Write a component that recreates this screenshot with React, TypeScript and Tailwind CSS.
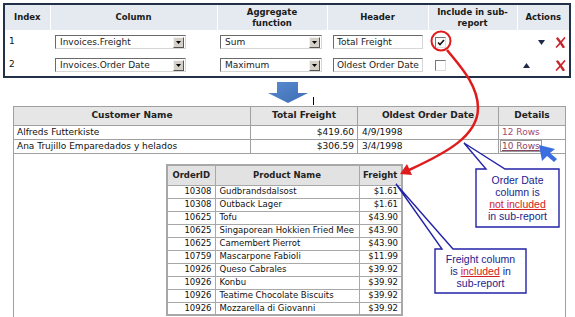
import React from "react";

const DropArrow = () => (
  <svg width="5" height="3" viewBox="0 0 5 3">
    <path d="M0 0H5L2.5 3Z" fill="#000" />
  </svg>
);

function Select({ value, className }: { value: string; className: string }) {
  return (
    <div className={`flex h-[14px] items-center border border-t-[#6a6a6a] border-l-[#6a6a6a] border-b-[#d6d6d6] border-r-[#d6d6d6] bg-white ${className}`}>
      <span className="flex-1 truncate pl-[4px] text-[9px] leading-none text-[#222]">{value}</span>
      <span className="mr-[1px] flex h-[11px] w-[11px] items-center justify-center border border-t-[#f4f4f4] border-l-[#f4f4f4] border-b-[#555] border-r-[#555] bg-[#d4d0c8]">
        <DropArrow />
      </span>
    </div>
  );
}

function TextBox({ value }: { value: string }) {
  return (
    <div className="flex h-[14px] w-[90px] items-center border border-t-[#6a6a6a] border-l-[#6a6a6a] border-b-[#d6d6d6] border-r-[#d6d6d6] bg-white pl-[3px] text-[9px] leading-none text-[#222]">
      {value}
    </div>
  );
}

function CheckBox({ checked }: { checked?: boolean }) {
  return (
    <div className="flex h-[11px] w-[11px] items-center justify-center border border-t-[#777] border-l-[#777] border-b-[#ddd] border-r-[#ddd] bg-white">
      {checked && (
        <svg width="8" height="7" viewBox="0 0 8 7">
          <path d="M1 3.5L3 5.5L7 1" stroke="#111" strokeWidth="1.6" fill="none" />
        </svg>
      )}
    </div>
  );
}

const RedX = () => (
  <svg width="11" height="11" viewBox="0 0 11 11">
    <path d="M2.5 1.5C4.5 4 6.5 7 8.5 10" stroke="#c9262c" strokeWidth="2.4" strokeLinecap="round" fill="none" />
    <path d="M9.5 1C7 4 4.5 7 1.5 10" stroke="#c9262c" strokeWidth="1.7" strokeLinecap="round" fill="none" />
  </svg>
);

const Tri = ({ up }: { up?: boolean }) => (
  <svg width="7" height="5" viewBox="0 0 7 5">
    <path d={up ? "M3.5 0L7 5H0Z" : "M0 0H7L3.5 5Z"} fill="#1e2a48" />
  </svg>
);

const subRows = [
  ["10308", "Gudbrandsdalsost", "$1.61"],
  ["10308", "Outback Lager", "$1.61"],
  ["10625", "Tofu", "$43.90"],
  ["10625", "Singaporean Hokkien Fried Mee", "$43.90"],
  ["10625", "Camembert Pierrot", "$43.90"],
  ["10759", "Mascarpone Fabioli", "$11.99"],
  ["10926", "Queso Cabrales", "$39.92"],
  ["10926", "Konbu", "$39.92"],
  ["10926", "Teatime Chocolate Biscuits", "$39.92"],
  ["10926", "Mozzarella di Giovanni", "$39.92"],
];

export default function App() {
  return (
    <div className="relative h-[317px] w-[575px] overflow-hidden bg-white font-['DejaVu_Sans',Verdana,sans-serif] text-[9px] text-[#111]">
      {/* column editor */}
      <div className="ml-[3px] mt-[3px] w-[568px] border-2 border-[#22304a]">
        <table className="w-full table-fixed border-collapse">
          <colgroup>
            <col className="w-[45px]" />
            <col className="w-[167px]" />
            <col className="w-[110px]" />
            <col className="w-[101px]" />
            <col className="w-[89px]" />
            <col />
          </colgroup>
          <thead>
            <tr className="h-[25px] bg-[#e4eaf0] text-[8.5px] font-bold leading-[11px] text-[#1a1a1a]">
              <th className="border-r border-white">Index</th>
              <th className="border-r border-white">Column</th>
              <th className="border-r border-white">Aggregate<br />function</th>
              <th className="border-r border-white">Header</th>
              <th className="border-r border-white">Include in sub-<br />report</th>
              <th>Actions</th>
            </tr>
          </thead>
          <tbody>
            <tr className="h-[24px]">
              <td className="pl-[4px]">1</td>
              <td className="pl-[5px]"><Select value="Invoices.Freight" className="w-[131px]" /></td>
              <td className="pl-[3px]"><Select value="Sum" className="w-[102px]" /></td>
              <td className="pl-[6px]"><TextBox value="Total Freight" /></td>
              <td className="pl-[7px]"><CheckBox checked /></td>
              <td className="pl-[6px]">
                <div className="flex items-center">
                  <span className="w-[15px]" />
                  <span className="flex w-[17px]"><Tri /></span>
                  <RedX />
                </div>
              </td>
            </tr>
            <tr className="h-[22px]">
              <td className="pl-[4px]">2</td>
              <td className="pl-[5px]"><Select value="Invoices.Order Date" className="w-[131px]" /></td>
              <td className="pl-[3px]"><Select value="Maximum" className="w-[102px]" /></td>
              <td className="pl-[6px]"><TextBox value="Oldest Order Date" /></td>
              <td className="pl-[7px]"><CheckBox /></td>
              <td className="pl-[6px]">
                <div className="flex items-center">
                  <span className="flex w-[15px]"><Tri up /></span>
                  <span className="w-[17px]" />
                  <RedX />
                </div>
              </td>
            </tr>
          </tbody>
        </table>
      </div>

      {/* report preview */}
      <table className="ml-[13px] mt-[28px] w-[552px] table-fixed border-collapse border border-[#a0a0a0] text-[9px]">
        <colgroup>
          <col className="w-[237px]" />
          <col className="w-[107px]" />
          <col className="w-[141px]" />
          <col className="w-[67px]" />
        </colgroup>
        <thead>
          <tr className="h-[19px] bg-[#e6e6e6] font-bold text-[#222]">
            <th className="border border-[#a0a0a0]">Customer Name</th>
            <th className="border border-[#a0a0a0]">Total Freight</th>
            <th className="border border-[#a0a0a0]">Oldest Order Date</th>
            <th className="border border-[#a0a0a0]">Details</th>
          </tr>
        </thead>
        <tbody>
          <tr className="h-[14px] leading-none">
            <td className="border border-[#a0a0a0] pl-[3px]">Alfreds Futterkiste</td>
            <td className="border border-[#a0a0a0] pr-[3px] text-right">$419.60</td>
            <td className="border border-[#a0a0a0] pl-[4px]">4/9/1998</td>
            <td className="border border-[#a0a0a0] pl-[3px] text-[#a34a72]">12 Rows</td>
          </tr>
          <tr className="h-[14px] leading-none">
            <td className="border border-[#a0a0a0] pl-[3px]">Ana Trujillo Emparedados y helados</td>
            <td className="border border-[#a0a0a0] pr-[3px] text-right">$306.59</td>
            <td className="border border-[#a0a0a0] pl-[4px]">3/4/1998</td>
            <td className="border border-[#a0a0a0] pl-[1px]">
              <span className="border border-[#999] px-[1px] text-[#8a4666] underline">10 Rows</span>
            </td>
          </tr>
          <tr>
            <td colSpan={4} className="h-[180px] border-x border-[#a0a0a0] align-top">
              <table className="ml-[152px] mt-[10px] w-[235px] table-fixed border-collapse border-2 border-[#a8a8a8] text-[8.5px]">
                <colgroup>
                  <col className="w-[48px]" />
                  <col className="w-[144px]" />
                  <col className="w-[43px]" />
                </colgroup>
                <thead>
                  <tr className="h-[20px] bg-[#e2e2e2] font-bold text-[#222]">
                    <th className="border border-[#a8a8a8]">OrderID</th>
                    <th className="border border-[#a8a8a8]">Product Name</th>
                    <th className="border border-[#a8a8a8]">Freight</th>
                  </tr>
                </thead>
                <tbody>
                  {subRows.map((r, i) => (
                    <tr key={i} className="h-[13px] leading-none">
                      <td className="border border-[#a8a8a8] pr-[3px] text-right">{r[0]}</td>
                      <td className="overflow-hidden whitespace-nowrap border border-[#a8a8a8] pl-[4px]">{r[1]}</td>
                      <td className="border border-[#a8a8a8] pr-[3px] text-right">{r[2]}</td>
                    </tr>
                  ))}
                </tbody>
              </table>
            </td>
          </tr>
        </tbody>
      </table>

      {/* annotations */}
      <svg className="pointer-events-none absolute left-0 top-0" width="575" height="317" viewBox="0 0 575 317">
        <defs>
          <linearGradient id="blueArrow" x1="0" y1="0" x2="1" y2="1">
            <stop offset="0" stopColor="#5a8bd0" />
            <stop offset="1" stopColor="#3d6db2" />
          </linearGradient>
        </defs>
        <path d="M277 82H298V93H308L288 103L268 93H277Z" fill="url(#blueArrow)" />
        <path d="M313.5 97V105" stroke="#000" strokeWidth="1" />

        <circle cx="441" cy="41" r="9.5" stroke="#e01b1b" strokeWidth="2" fill="none" />
        <path d="M447 50C458 64 478 84 478 108C478 136 446 153 409 170" stroke="#e01b1b" strokeWidth="2.5" fill="none" />
        <path d="M400 174L412 175L407 164Z" fill="#e01b1b" />

        <path d="M476 169H486L464 143L505 169H559V227H476Z" fill="#fff" stroke="#2323a8" strokeWidth="1.4" />
        <path d="M435 249H442L396 184L453 249H526V293H435Z" fill="#fff" stroke="#2323a8" strokeWidth="1.4" />

        <path d="M539 145L555 149L550 153L557 159L554 162L547 156L542 161Z" fill="#3b6fe0" />
      </svg>

      <div className="absolute left-[476px] top-[174px] w-[83px] text-center font-['Liberation_Sans',Arial,sans-serif] text-[10.5px] leading-[12px] text-[#1c1c8c]">
        Order Date<br />column is<br />
        <span className="text-[#d42020] underline">not included</span><br />
        in sub-report
      </div>
      <div className="absolute left-[435px] top-[253px] w-[91px] text-center font-['Liberation_Sans',Arial,sans-serif] text-[10.5px] leading-[12px] text-[#1c1c8c]">
        Freight column<br />is <span className="text-[#d42020] underline">included</span> in<br />sub-report
      </div>
    </div>
  );
}
